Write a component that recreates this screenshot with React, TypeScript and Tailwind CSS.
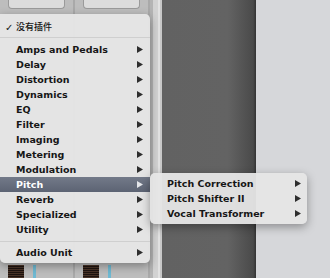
import React from "react";

const groups = [
    "Amps and Pedals",
    "Delay",
    "Distortion",
    "Dynamics",
    "EQ",
    "Filter",
    "Imaging",
    "Metering",
    "Modulation",
    "Pitch",
    "Reverb",
    "Specialized",
    "Utility",
];

const pitchItems = ["Pitch Correction", "Pitch Shifter II", "Vocal Transformer"];

function Arrow({ light }: { light?: boolean }) {
    return (
        <svg width="6" height="7" viewBox="0 0 6 7" className="shrink-0">
            <path d="M0 0 L6 3.5 L0 7 Z" fill={light ? "#e4e6ea" : "#2e2e2e"} />
        </svg>
    );
}

function Channel() {
    return (
        <div className="relative flex h-full w-[75px] flex-col border-r-2 border-[#a9a9a9] bg-[#bdbdbd]">
            <div className="mx-2 h-[9px] rounded-b-sm border border-t-0 border-[#9a9a9a] bg-[#dcdcdc]" />
            <div className="flex-1" />
            <div className="flex h-[13px] items-end gap-[9px] pl-2">
                <div className="h-full w-[16px] bg-[repeating-linear-gradient(to_bottom,#4a3428_0px,#4a3428_1px,#1e1410_1px,#1e1410_2px)]" />
                <div className="h-full w-[3px] bg-[#6fb9d2]" />
            </div>
        </div>
    );
}

export default function App() {
    return (
        <div
            className="relative flex h-[278px] w-[330px] overflow-hidden"
            style={{ fontFamily: '"DejaVu Sans", "Noto Sans CJK SC", sans-serif' }}
        >
            <div className="flex h-full w-[150px]">
                <Channel />
                <Channel />
            </div>
            <div className="flex h-full w-[12px] bg-[#c8c8c8]">
                <div className="w-[3px] bg-[#b4b4b4]" />
                <div className="w-[5px] bg-[#d2d2d2]" />
                <div className="w-[2px] bg-[#e2e2e2]" />
            </div>
            <div className="h-full w-[94px] bg-[linear-gradient(to_right,#626262_0%,#636363_70%,#4a4a4a_97%,#333_100%)]" />
            <div className="h-full flex-1 bg-[#d6d7da]" />

            <div className="absolute left-0 top-[14px] flex h-[249px] w-[150px] flex-col rounded-b-[5px] rounded-tr-[5px] bg-[#e6e6e6]/95 pt-[6px] text-[9.5px] font-bold leading-[15px] text-[#161616] shadow-[0_3px_10px_rgba(0,0,0,0.35)]">
                <div className="flex h-[15px] shrink-0 items-center pl-[5px]">
                    <span className="w-[11px] text-[10px] font-bold">✓</span>
                    <span className="text-[9px] font-medium">没有插件</span>
                </div>
                <div className="mb-[4px] mt-[2px] h-px shrink-0 bg-[#cfcfcf]" />
                {groups.map((g) => (
                    <div
                        key={g}
                        className={
                            g === "Pitch"
                                ? "flex h-[15px] shrink-0 items-center justify-between bg-[linear-gradient(to_bottom,#737a89,#5c6373)] pl-[16px] pr-[7px] text-white"
                                : "flex h-[15px] shrink-0 items-center justify-between pl-[16px] pr-[7px]"
                        }
                    >
                        <span>{g}</span>
                        <Arrow light={g === "Pitch"} />
                    </div>
                ))}
                <div className="mb-[3px] mt-[4px] h-px shrink-0 bg-[#cfcfcf]" />
                <div className="flex h-[15px] shrink-0 items-center justify-between pl-[16px] pr-[7px]">
                    <span>Audio Unit</span>
                    <Arrow />
                </div>
            </div>

            <div className="absolute left-[150px] top-[173px] flex w-[157px] flex-col rounded-[5px] bg-[#e6e6e6]/95 py-[3px] text-[9.5px] font-bold leading-[15px] text-[#161616] shadow-[0_3px_10px_rgba(0,0,0,0.35)]">
                {pitchItems.map((p) => (
                    <div key={p} className="flex h-[15px] items-center justify-between pl-[17px] pr-[6px]">
                        <span>{p}</span>
                        <Arrow />
                    </div>
                ))}
            </div>
        </div>
    );
}
